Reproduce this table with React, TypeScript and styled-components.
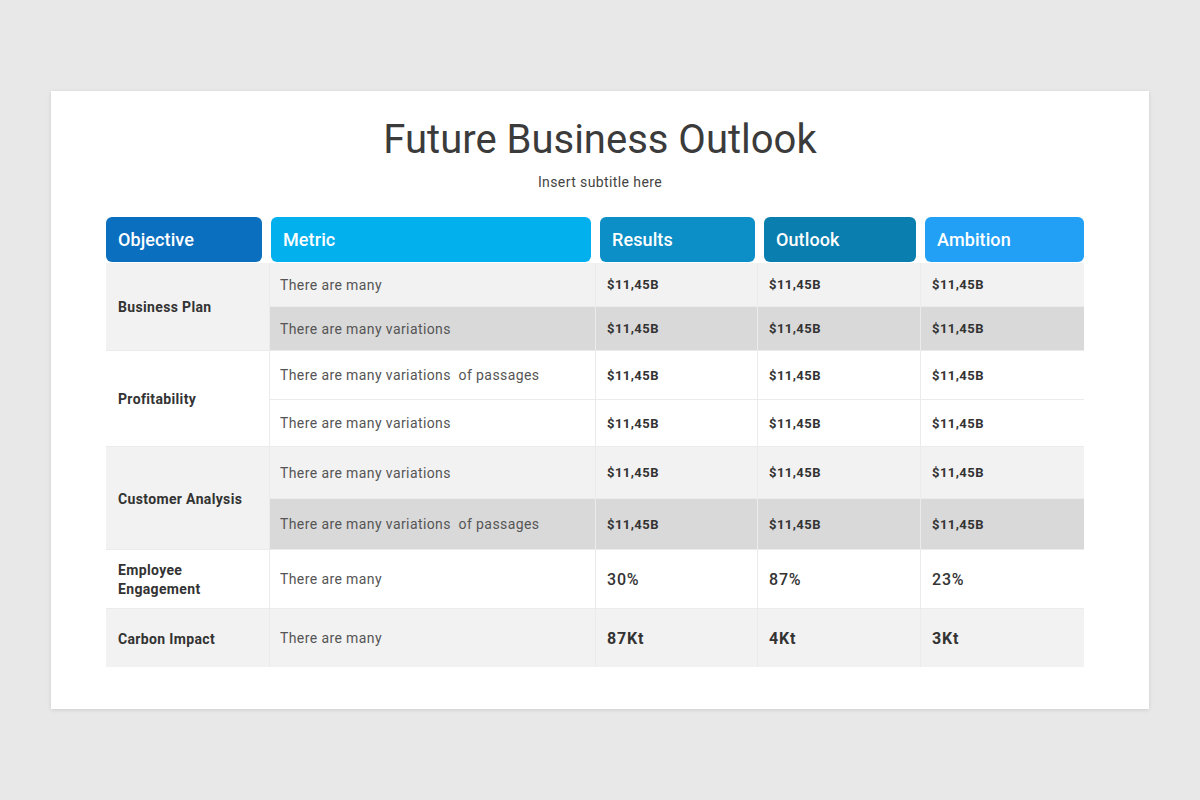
import React from 'react';
import styled, { createGlobalStyle } from 'styled-components';

const GlobalStyle = createGlobalStyle`
  html, body {
    margin: 0;
    padding: 0;
    background: #e9e8e9;
    font-family: Roboto, "Liberation Sans", Arial, sans-serif;
  }
`;

type Tone = 'white' | 'light' | 'dark';

const toneColors: Record<Tone, string> = {
  white: '#ffffff',
  light: '#f2f2f2',
  dark: '#d9d9d9',
};

const Page = styled.div`
  min-height: 100vh;
  display: flex;
  align-items: center;
  justify-content: center;
`;

const Slide = styled.section`
  width: 1098px;
  box-sizing: border-box;
  background: #ffffff;
  box-shadow: 0 1px 4px rgba(0, 0, 0, 0.12);
  padding: 25px 55px 42px 55px;
  display: flex;
  flex-direction: column;
  align-items: center;
`;

const Title = styled.h1`
  margin: 0;
  font-size: 40px;
  line-height: 48px;
  font-weight: 400;
  color: #3b3b3b;
`;

const Subtitle = styled.p`
  margin: 8px 0 0;
  font-size: 14px;
  line-height: 20px;
  color: #444444;
  letter-spacing: 0.4px;
`;

const Table = styled.div`
  margin-top: 25px;
  align-self: flex-start;
  width: 978px;
  display: flex;
  flex-direction: column;
  gap: 1px;
`;

const HeaderRow = styled.div`
  display: grid;
  grid-template-columns: 156px 320px 155px 152px 159px;
  column-gap: 9px;
  height: 45px;
`;

const HeaderCell = styled.div<{ $color: string }>`
  background: ${({ $color }) => $color};
  border-radius: 6px;
  display: flex;
  align-items: center;
  padding-left: 12px;
  color: #ffffff;
  font-size: 18px;
  font-weight: 500;
  letter-spacing: 0.1px;
`;

const Body = styled.div`
  display: grid;
  grid-template-columns: 163px 325px 161px 162px 163px;
  grid-template-rows: 43px 43px 48px 46px 51px 50px 58px 58px;
  gap: 1px;
  background: #ebebeb;
`;

const Cell = styled.div<{ $tone: Tone; $span?: number }>`
  background: ${({ $tone }) => toneColors[$tone]};
  grid-row: ${({ $span }) => ($span ? `span ${$span}` : 'auto')};
  display: flex;
  align-items: center;
  box-sizing: border-box;
`;

const ObjectiveLabel = styled.span`
  padding-left: 12px;
  padding-top: 2px;
  font-size: 14px;
  line-height: 19px;
  font-weight: 700;
  color: #333333;
  letter-spacing: 0.35px;
`;

const MetricText = styled.span`
  padding-left: 10px;
  font-size: 14px;
  color: #555555;
  letter-spacing: 0.4px;
  white-space: pre;
`;

const Value = styled.span<{ $large?: boolean; $weight?: number }>`
  padding-left: 11px;
  font-size: ${({ $large }) => ($large ? '16px' : '13px')};
  font-weight: ${({ $weight }) => $weight ?? 700};
  color: #333333;
  letter-spacing: ${({ $large }) => ($large ? '0.8px' : '0.45px')};
`;

const headers = [
  { label: 'Objective', color: '#0b6fbf' },
  { label: 'Metric', color: '#03b0ee' },
  { label: 'Results', color: '#0b8fc6' },
  { label: 'Outlook', color: '#0a7eaf' },
  { label: 'Ambition', color: '#22a0f6' },
];

interface Row {
  metric: string;
  tone: Tone;
  values: string[];
  large?: boolean;
  weight?: number;
}

interface Group {
  objective: React.ReactNode;
  tone: Tone;
  rows: Row[];
}

const money = ['$11,45B', '$11,45B', '$11,45B'];

const groups: Group[] = [
  {
    objective: 'Business Plan',
    tone: 'light',
    rows: [
      { metric: 'There are many', tone: 'light', values: money },
      { metric: 'There are many variations', tone: 'dark', values: money },
    ],
  },
  {
    objective: 'Profitability',
    tone: 'white',
    rows: [
      { metric: 'There are many variations  of passages', tone: 'white', values: money },
      { metric: 'There are many variations', tone: 'white', values: money },
    ],
  },
  {
    objective: 'Customer Analysis',
    tone: 'light',
    rows: [
      { metric: 'There are many variations', tone: 'light', values: money },
      { metric: 'There are many variations  of passages', tone: 'dark', values: money },
    ],
  },
  {
    objective: (
      <>
        Employee
        <br />
        Engagement
      </>
    ),
    tone: 'white',
    rows: [
      { metric: 'There are many', tone: 'white', values: ['30%', '87%', '23%'], large: true, weight: 500 },
    ],
  },
  {
    objective: 'Carbon Impact',
    tone: 'light',
    rows: [
      { metric: 'There are many', tone: 'light', values: ['87Kt', '4Kt', '3Kt'], large: true },
    ],
  },
];

export default function App() {
  return (
    <>
      <GlobalStyle />
      <Page>
        <Slide>
          <Title>Future Business Outlook</Title>
          <Subtitle>Insert subtitle here</Subtitle>
          <Table>
            <HeaderRow>
              {headers.map((h) => (
                <HeaderCell key={h.label} $color={h.color}>
                  {h.label}
                </HeaderCell>
              ))}
            </HeaderRow>
            <Body>
              {groups.map((group, gi) => (
                <React.Fragment key={gi}>
                  <Cell $tone={group.tone} $span={group.rows.length}>
                    <ObjectiveLabel>{group.objective}</ObjectiveLabel>
                  </Cell>
                  {group.rows.map((row, ri) => (
                    <React.Fragment key={ri}>
                      <Cell $tone={row.tone}>
                        <MetricText>{row.metric}</MetricText>
                      </Cell>
                      {row.values.map((v, vi) => (
                        <Cell key={vi} $tone={row.tone}>
                          <Value $large={row.large} $weight={row.weight}>
                            {v}
                          </Value>
                        </Cell>
                      ))}
                    </React.Fragment>
                  ))}
                </React.Fragment>
              ))}
            </Body>
          </Table>
        </Slide>
      </Page>
    </>
  );
}
